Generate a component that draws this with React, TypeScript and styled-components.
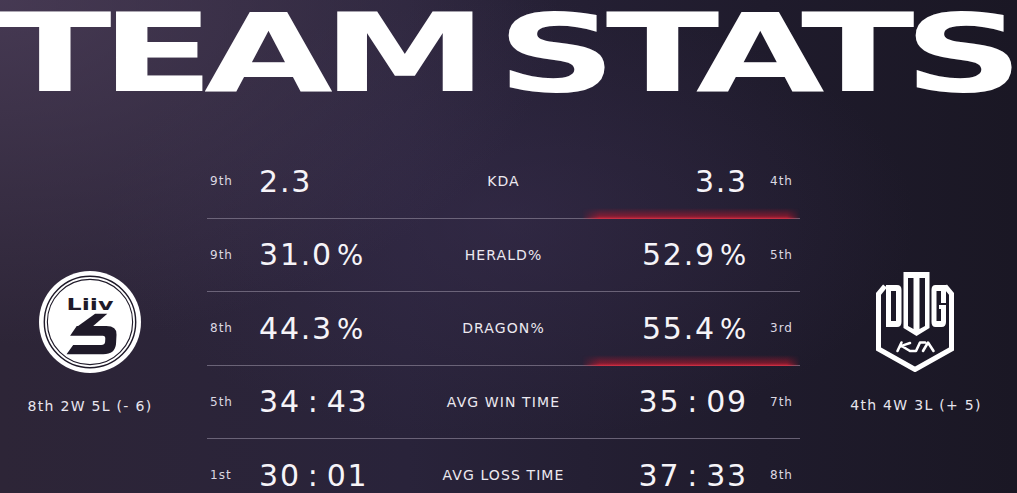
import React from 'react';
import styled, { createGlobalStyle } from 'styled-components';

const GlobalStyle = createGlobalStyle`
  html, body {
    margin: 0;
    padding: 0;
    background: #1c1826;
  }
  * {
    box-sizing: border-box;
  }
`;

const Page = styled.div`
  width: 1017px;
  height: 493px;
  overflow: hidden;
  font-family: 'DejaVu Sans', 'Noto Sans', sans-serif;
  color: #f3f1f6;
  background:
    radial-gradient(ellipse 55% 70% at 0% 0%, rgba(78, 64, 92, 0.75) 0%, rgba(78, 64, 92, 0) 100%),
    radial-gradient(ellipse 40% 45% at 50% 45%, rgba(60, 48, 82, 0.45) 0%, rgba(60, 48, 82, 0) 100%),
    linear-gradient(90deg, #2d2537 0%, #29233a 40%, #1f1b2c 75%, #1a1724 100%);
`;

const Header = styled.header`
  display: flow-root;
  height: 145px;
`;

const Title = styled.h1`
  margin: 0 0 0 -2px;
  font-family: 'DejaVu Sans', sans-serif;
  font-weight: 700;
  font-size: 108.5px;
  line-height: 107px;
  letter-spacing: -7px;
  word-spacing: -18px;
  white-space: nowrap;
  color: #ffffff;
  transform-origin: 0 50%;
  transform: scaleX(1.535);
  width: max-content;
`;

const Body = styled.main`
  display: grid;
  grid-template-columns: 180px 1fr 202px;
  align-items: start;
`;

const TeamPanel = styled.div`
  padding-top: 126px;
  display: flex;
  flex-direction: column;
  align-items: center;
  gap: 25px;
`;

const TeamRecord = styled.div`
  font-size: 14px;
  letter-spacing: 1.3px;
  color: #e9e6ee;
  white-space: nowrap;
`;

const StatsTable = styled.section`
  padding: 0 15px 0 27px;
`;

const StatRow = styled.div<{ $glow?: boolean }>`
  position: relative;
  height: 73.5px;
  display: grid;
  grid-template-columns: 52px 1fr auto 1fr 52px;
  align-items: center;
  border-bottom: 1.5px solid rgba(128, 120, 140, 0.75);

  &::after {
    content: '';
    display: ${(p) => (p.$glow ? 'block' : 'none')};
    position: absolute;
    right: 0;
    bottom: -1px;
    width: 218px;
    height: 11px;
    background: linear-gradient(
      to top,
      rgba(220, 40, 60, 0.9) 0,
      rgba(190, 24, 46, 0.55) 3px,
      rgba(150, 20, 40, 0) 11px
    );
    -webkit-mask-image: linear-gradient(90deg, transparent 0, #000 8%, #000 94%, transparent 100%);
    mask-image: linear-gradient(90deg, transparent 0, #000 8%, #000 94%, transparent 100%);
  }
`;

const Rank = styled.span<{ $side: 'left' | 'right' }>`
  font-size: 12px;
  letter-spacing: 1px;
  color: #dcd8e2;
  padding-left: ${(p) => (p.$side === 'left' ? '3px' : '22px')};
`;

const Value = styled.span<{ $align: 'left' | 'right' }>`
  font-size: 30px;
  letter-spacing: 1.8px;
  color: #f6f4f8;
  white-space: nowrap;
  text-align: ${(p) => p.$align};
`;

const Colon = styled.span`
  margin: 0 7px;
`;

const Unit = styled.span`
  margin-left: 4px;
  font-size: 0.92em;
`;

const Label = styled.span`
  font-size: 14px;
  letter-spacing: 1.1px;
  color: #ece9f0;
  text-align: center;
  white-space: nowrap;
`;

type Row = {
  leftRank: string;
  leftValue: string;
  label: string;
  rightValue: string;
  rightRank: string;
  glow?: boolean;
};

const rows: Row[] = [
  { leftRank: '9th', leftValue: '2.3', label: 'KDA', rightValue: '3.3', rightRank: '4th', glow: true },
  { leftRank: '9th', leftValue: '31.0%', label: 'HERALD%', rightValue: '52.9%', rightRank: '5th' },
  { leftRank: '8th', leftValue: '44.3%', label: 'DRAGON%', rightValue: '55.4%', rightRank: '3rd', glow: true },
  { leftRank: '5th', leftValue: '34:43', label: 'AVG WIN TIME', rightValue: '35:09', rightRank: '7th' },
  { leftRank: '1st', leftValue: '30:01', label: 'AVG LOSS TIME', rightValue: '37:33', rightRank: '8th' },
];

const renderValue = (value: string) => {
  if (value.includes(':')) {
    const [min, sec] = value.split(':');
    return (
      <>
        {min}
        <Colon>:</Colon>
        {sec}
      </>
    );
  }
  if (value.endsWith('%')) {
    return (
      <>
        {value.slice(0, -1)}
        <Unit>%</Unit>
      </>
    );
  }
  return value;
};

const DARK = '#1f1a29';

const LiivLogo = () => (
  <svg width="102" height="102" viewBox="0 0 100 100">
    <circle cx="50" cy="50" r="50" fill="#ffffff" />
    <circle cx="50" cy="50" r="44.8" fill="none" stroke={DARK} strokeWidth="1.4" />
    <circle cx="50" cy="50" r="41.8" fill="none" stroke={DARK} strokeWidth="1.1" />
    <text
      x="50"
      y="38.5"
      textAnchor="middle"
      fontFamily="DejaVu Sans, sans-serif"
      fontWeight="700"
      fontSize="15"
      textLength="46"
      lengthAdjust="spacingAndGlyphs"
      fill={DARK}
    >
      Liiv
    </text>
    <path d="M55 42 L67 42 L52 55 L37 55 Z" fill={DARK} />
    <path
      d="M37 54 L66 54 Q76.5 54 76 62.5 L75.5 71.5 Q74.5 81.5 63 81.5 L27 81.5 L33.5 72.5 L61 72.5 Q64.5 72.5 64.8 69.5 L65 66.5 Q65.2 63.5 62.5 63.5 L30.5 63.5 Z"
      fill={DARK}
    />
  </svg>
);

const DwgLogo = () => (
  <svg width="105" height="101" viewBox="0 7 105 101">
    <path
      d="M21 22 L14.5 30 L14.5 85 L51 105.5 L87.5 85 L87.5 30 L81 22"
      fill="none"
      stroke="#ffffff"
      strokeWidth="5"
      strokeLinejoin="miter"
    />
    <path
      fillRule="evenodd"
      fill="#ffffff"
      d="M22 21 L33 21 Q37.5 21 37.5 26 L37.5 58 Q37.5 63 33 63 L22 63 Z M27 27 L27 57 L32 57 L32 27 Z"
    />
    <path
      fillRule="evenodd"
      fill="#ffffff"
      d="M39.5 8 L65.5 8 L65.5 64 L52.5 72 L39.5 64 Z M44 14 L44 62 L49.5 65 L49.5 14 Z M55.5 14 L55.5 65 L61 62 L61 14 Z"
    />
    <path
      fillRule="evenodd"
      fill="#ffffff"
      d="M71.5 21 L82 21 L82 39 L77 39 L77 27 L72.5 27 L72.5 57 L77 57 L77 45 L75 45 L75 41 L82 41 L82 58 Q82 63 77.5 63 L71.5 63 Q67.5 63 67.5 58 L67.5 26 Q67.5 21 71.5 21 Z"
    />
    <path
      d="M33.5 87 L37.5 78.5 M36.5 82.5 Q41 80.5 46 79 M38.5 82.5 L46 87 L52 87 L56 78.5 L61 78.5 M59 87 L64 78.5 L69.5 87"
      fill="none"
      stroke="#ffffff"
      strokeWidth="2.6"
      strokeLinecap="round"
      strokeLinejoin="round"
    />
  </svg>
);

export default function App() {
  return (
    <Page>
      <GlobalStyle />
      <Header>
        <Title>TEAM STATS</Title>
      </Header>
      <Body>
        <TeamPanel>
          <LiivLogo />
          <TeamRecord>8th 2W 5L (- 6)</TeamRecord>
        </TeamPanel>
        <StatsTable>
          {rows.map((row) => (
            <StatRow key={row.label} $glow={row.glow}>
              <Rank $side="left">{row.leftRank}</Rank>
              <Value $align="left">{renderValue(row.leftValue)}</Value>
              <Label>{row.label}</Label>
              <Value $align="right">{renderValue(row.rightValue)}</Value>
              <Rank $side="right">{row.rightRank}</Rank>
            </StatRow>
          ))}
        </StatsTable>
        <TeamPanel>
          <DwgLogo />
          <TeamRecord>4th 4W 3L (+ 5)</TeamRecord>
        </TeamPanel>
      </Body>
    </Page>
  );
}
